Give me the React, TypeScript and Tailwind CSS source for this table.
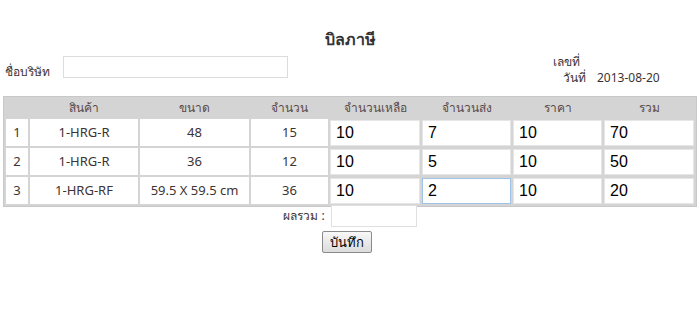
import React from "react";

const rows = [
  { n: "1", p: "1-HRG-R", s: "48", q: "15", a: "10", b: "7", c: "10", d: "70" },
  { n: "2", p: "1-HRG-R", s: "36", q: "12", a: "10", b: "5", c: "10", d: "50" },
  { n: "3", p: "1-HRG-RF", s: "59.5 X 59.5 cm", q: "36", a: "10", b: "2", c: "10", d: "20" },
];

const thai = { fontFamily: 'Tahoma, "Noto Sans", "DejaVu Sans", sans-serif' };
const arial = { fontFamily: '"Liberation Sans", Arial, sans-serif' };

function Inp({ v, focus }: { v: string; focus?: boolean }) {
  return (
    <input
      readOnly
      value={v}
      style={arial}
      className={`block w-full h-[26px] bg-white px-[5px] text-[16px] text-black outline-none border ${
        focus ? "border-[#9ec3e6]" : "border-[#e6e6e6]"
      }`}
    />
  );
}

export default function App() {
  return (
    <div className="w-[700px] h-[329px] bg-white text-[#3d3333] relative" style={thai}>
      <div className="pt-[27px] text-center text-[16px] font-bold leading-[24px] text-[#333]">บิลภาษี</div>
      <div className="flex items-start mt-[5px] h-[40px]">
        <div className="pl-[5px] pt-[7px] text-[12px] w-[63px] shrink-0">ชื่อบริษัท</div>
        <input readOnly className="w-[225px] h-[22px] border border-[#dcdcdc] bg-white" />
        <div className="ml-auto w-[150px] flex flex-col text-[12px] leading-[16px] mt-[-2px]">
          <div className="pl-[3px]">เลขที่</div>
          <div className="flex">
            <span className="w-[36px] text-right">วันที่</span>
            <span className="pl-[11px]">2013-08-20</span>
          </div>
        </div>
      </div>
      <div className="px-[3px]">
        <table
          className="w-[692px] bg-[#d4d4d4] text-[12px] border-separate table-fixed border border-[#c8c8c8]"
          style={{ borderSpacing: "2px" }}
        >
          <colgroup>
            <col className="w-[22px]" />
            <col className="w-[108px]" />
            <col className="w-[109px]" />
            <col className="w-[77px]" />
            <col className="w-[90px]" />
            <col className="w-[89px]" />
            <col className="w-[89px]" />
            <col className="w-[90px]" />
          </colgroup>
          <thead>
            <tr className="h-[17px] text-[#5a4a4a]">
              <th className="font-normal"></th>
              <th className="font-normal">สินค้า</th>
              <th className="font-normal">ขนาด</th>
              <th className="font-normal">จำนวน</th>
              <th className="font-normal">จำนวนเหลือ</th>
              <th className="font-normal">จำนวนส่ง</th>
              <th className="font-normal">ราคา</th>
              <th className="font-normal">รวม</th>
            </tr>
          </thead>
          <tbody>
            {rows.map((r, i) => (
              <tr key={r.n} className="h-[27px]">
                <td className="bg-white text-center text-[13px]">{r.n}</td>
                <td className="bg-white text-center text-[13px]">{r.p}</td>
                <td className="bg-white text-center text-[13px]">{r.s}</td>
                <td className="bg-white text-center text-[13px]">{r.q}</td>
                <td className="p-0"><Inp v={r.a} /></td>
                <td className="p-0"><Inp v={r.b} focus={i === 2} /></td>
                <td className="p-0"><Inp v={r.c} /></td>
                <td className="p-0"><Inp v={r.d} /></td>
              </tr>
            ))}
          </tbody>
        </table>
      </div>
      <div className="flex flex-col items-center mt-[-2px]">
        <div className="flex items-center">
          <span className="text-[12px] mr-[6px]">ผลรวม :</span>
          <input readOnly className="w-[86px] h-[22px] border border-[#e0e0e0] bg-white" />
        </div>
        <button className="mt-[4px] ml-[-6px] h-[22px] px-[7px] text-[13px] text-black border border-[#8a8a8a] rounded-[2px] bg-gradient-to-b from-[#f8f8f8] to-[#dcdcdc] leading-[18px]">
          บันทึก
        </button>
      </div>
    </div>
  );
}
